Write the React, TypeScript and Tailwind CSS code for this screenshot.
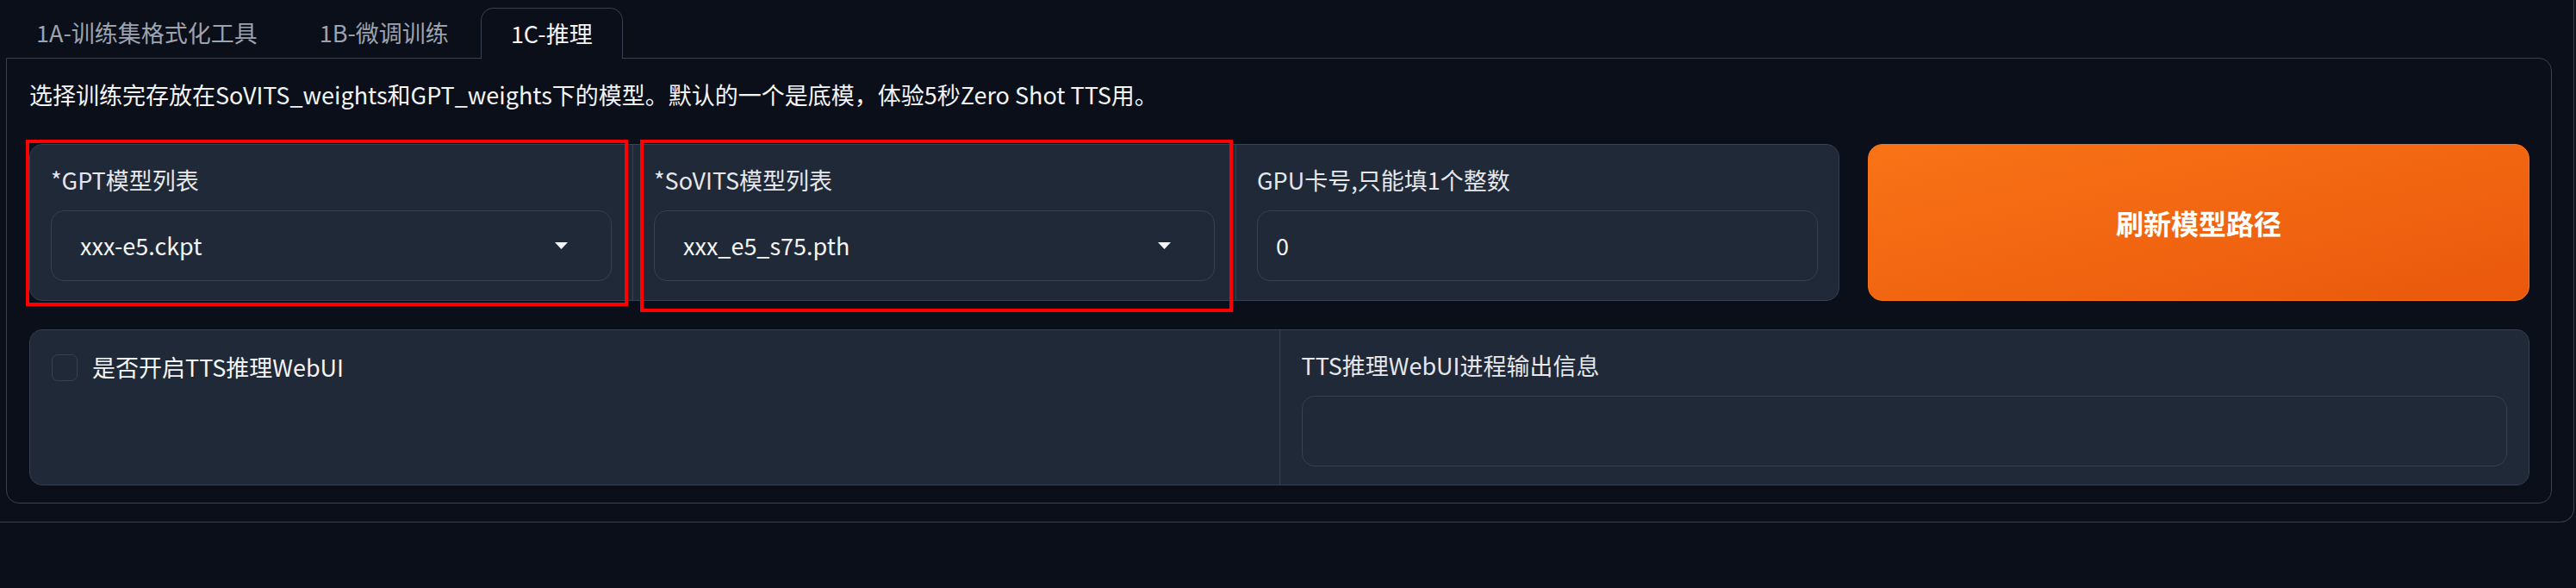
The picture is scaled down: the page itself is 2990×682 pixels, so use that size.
import React from "react";

const font = { fontFamily: '"Noto Sans CJK SC", "Noto Sans", sans-serif' };

function Caret() {
  return (
    <svg width="15" height="8" viewBox="0 0 15 8" className="shrink-0">
      <path d="M0 0 L15 0 L7.5 8 Z" fill="#f3f4f6" />
    </svg>
  );
}

function DropdownCard({ label, value }: { label: string; value: string }) {
  return (
    <div className="bg-[#1f2937] pt-[23px] pb-[22px] px-[24px] flex flex-col">
      <div className="h-[36px] leading-[36px] text-[27px] text-[#e5e7eb] whitespace-nowrap">{label}</div>
      <div className="mt-[17px] h-[82px] rounded-[15px] border border-[#374151] bg-[#1f2937] flex items-center pl-[33px] pr-[50px]">
        <span className="flex-1 text-[27px] text-[#f3f4f6]">{value}</span>
        <Caret />
      </div>
    </div>
  );
}

export default function App() {
  return (
    <div className="relative w-[2990px] h-[682px] bg-[#0b0f19] overflow-hidden" style={font}>
      <div className="w-[2988px] border-r border-b border-[#374151] rounded-br-[16px] pl-[7px] pr-[25px] pt-[9px] pb-[21px]">
        {/* tabs */}
        <div className="flex items-end gap-[2px] -mb-px relative z-10">
          <div className="h-[59px] px-[34px] border border-transparent flex items-center text-[27px] text-[#9ca3af]">
            1A-训练集格式化工具
          </div>
          <div className="h-[59px] px-[34px] border border-transparent flex items-center text-[27px] text-[#9ca3af]">
            1B-微调训练
          </div>
          <div className="h-[59px] px-[34px] border border-b-0 border-[#374151] rounded-t-[15px] bg-[#0b0f19] flex items-center text-[27px] text-[#f3f4f6]">
            1C-推理
          </div>
        </div>
        {/* panel */}
        <div className="border border-[#374151] rounded-b-[15px] rounded-tr-[15px] pt-[22px] pb-[20px] pl-[26px] pr-[25px] flex flex-col">
          <div className="h-[40px] leading-[40px] text-[27px] text-[#f3f4f6] whitespace-nowrap">
            选择训练完存放在SoVITS_weights和GPT_weights下的模型。默认的一个是底模，体验5秒Zero Shot TTS用。
          </div>
          {/* row 1 */}
          <div className="mt-[37px] flex gap-[33px]">
            <div className="w-[2101px] grid grid-cols-3 gap-px bg-[#374151] border border-[#374151] rounded-[15px] overflow-hidden">
              <DropdownCard label="*GPT模型列表" value="xxx-e5.ckpt" />
              <DropdownCard label="*SoVITS模型列表" value="xxx_e5_s75.pth" />
              <div className="bg-[#1f2937] pt-[23px] pb-[22px] px-[24px] flex flex-col">
                <div className="h-[36px] leading-[36px] text-[27px] text-[#e5e7eb] whitespace-nowrap">GPU卡号,只能填1个整数</div>
                <div className="mt-[17px] h-[82px] rounded-[15px] border border-[#374151] bg-[#1f2937] flex items-center pl-[21px]">
                  <span className="text-[27px] text-[#f3f4f6]">0</span>
                </div>
              </div>
            </div>
            <button className="flex-1 rounded-[17px] border border-[#f97316] bg-gradient-to-br from-[#f97316] to-[#ea580c] text-white text-[32px] font-semibold flex items-center justify-center">
              刷新模型路径
            </button>
          </div>
          {/* row 2 */}
          <div className="mt-[33px] grid grid-cols-2 gap-px bg-[#374151] border border-[#374151] rounded-[15px] overflow-hidden">
            <div className="bg-[#1f2937] px-[25px] pt-[25px] flex items-start">
              <div className="flex items-center gap-[17px]">
                <div className="w-[30px] h-[31px] rounded-[7px] border border-[#374151] bg-[#1f2937]" />
                <span className="text-[27px] leading-[36px] text-[#f3f4f6]">是否开启TTS推理WebUI</span>
              </div>
            </div>
            <div className="bg-[#1f2937] pt-[23px] pb-[21px] px-[25px] flex flex-col">
              <div className="h-[36px] leading-[36px] text-[27px] text-[#e5e7eb]">TTS推理WebUI进程输出信息</div>
              <div className="mt-[17px] h-[82px] rounded-[15px] border border-[#374151] bg-[#1f2937]" />
            </div>
          </div>
        </div>
      </div>
      {/* red annotation boxes */}
      <div className="absolute left-[30px] top-[162px] w-[699px] h-[193px] border-[4px] border-[#ff0000]" />
      <div className="absolute left-[743px] top-[162px] w-[688px] h-[200px] border-[4px] border-[#ff0000]" />
    </div>
  );
}
